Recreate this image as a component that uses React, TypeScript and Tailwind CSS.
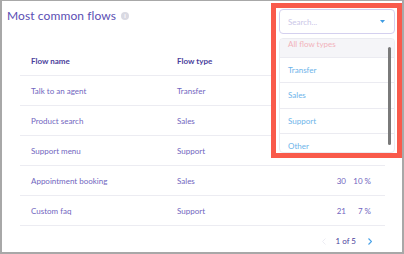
import React from 'react';

const rows = [
    { name: 'Talk to an agent', type: 'Transfer', count: 120, pct: '40 %' },
    { name: 'Product search', type: 'Sales', count: 60, pct: '20 %' },
    { name: 'Support menu', type: 'Support', count: 45, pct: '15 %' },
    { name: 'Appointment booking', type: 'Sales', count: 30, pct: '10 %' },
    { name: 'Custom faq', type: 'Support', count: 21, pct: '7 %' },
];

const options = ['Transfer', 'Sales', 'Support', 'Other'];

const App = () => {
    return (
        <div className="w-[404px] h-[254px] bg-white font-['Lato',sans-serif]">
            <div className="relative w-full h-full border-l-2 border-r-2 border-t border-b-2 border-[#a8a8a8] bg-white">
                <div className="flex items-center gap-[5px] pl-[5px] pt-[6px] h-[24px]">
                    <h2 className="text-[12px] text-[#5a4eb3] tracking-[0.1px]">Most common flows</h2>
                    <span className="w-[8px] h-[8px] rounded-full bg-[#d9d9e2] flex items-center justify-center text-[6px] text-white font-bold leading-none">i</span>
                </div>

                <div className="mt-[21px] ml-[18px] w-[365px]">
                    <div className="flex items-center h-[30px] border-b border-[#ececf2] text-[8px] font-bold text-[#4a3e9c]">
                        <div className="w-[157px] pl-[11px]">Flow name</div>
                        <div className="flex-1">Flow type</div>
                    </div>
                    {rows.map((r) => (
                        <div key={r.name} className="flex items-center h-[30px] border-b border-[#ececf2] text-[8px] text-[#7166c0]">
                            <div className="w-[157px] pl-[11px]">{r.name}</div>
                            <div className="flex-1">{r.type}</div>
                            <div className="w-[30px] text-right">{r.count}</div>
                            <div className="w-[25px] text-right">{r.pct}</div>
                            <div className="w-[14px]" />
                        </div>
                    ))}
                    <div className="flex items-center justify-end h-[30px] pr-[13px] text-[8px] text-[#4a3e9c]">
                        <svg width="4" height="7" viewBox="0 0 4 7" className="mr-[10px]"><path d="M3.5 0.5L0.5 3.5L3.5 6.5" fill="none" stroke="#ececf3" strokeWidth="1" /></svg>
                        <span>1 of 5</span>
                        <svg width="4" height="7" viewBox="0 0 4 7" className="ml-[12px]"><path d="M0.5 0.5L3.5 3.5L0.5 6.5" fill="none" stroke="#4aa3e8" strokeWidth="1.2" /></svg>
                    </div>
                </div>

                <div className="absolute left-[269px] top-[2px] w-[131px] h-[155px] border-[5px] border-[#f95a4b] bg-white">
                    <div className="ml-[3px] mr-[2px] mt-[1px] h-[25px] border border-[#d4d0ef] rounded-[4px] flex items-center justify-between pl-[8px] pr-[9px]">
                        <span className="text-[8px] text-[#cbc7e8]">Search...</span>
                        <svg width="5" height="3" viewBox="0 0 5 3"><path d="M0 0h5L2.5 3z" fill="#3f9ce2" /></svg>
                    </div>
                    <div className="relative ml-[3px] mr-[2px] mt-[4px] h-[115px] border border-[#ebebf1] rounded-[4px] overflow-hidden">
                        <div className="mt-[-7px]">
                            <div className="h-[25.5px] flex items-center pl-[8px] bg-[#f5f5f8] border-b border-[#ebebf1] text-[8px] text-[#f2b3bb]">All flow types</div>
                            {options.map((o) => (
                                <div key={o} className="h-[25.5px] flex items-center pl-[8px] border-b border-[#ebebf1] text-[8px] text-[#6db4ea]">{o}</div>
                            ))}
                        </div>
                        <div className="absolute right-[3px] top-[8px] w-[3px] h-[98px] rounded-full bg-[#7a7a7a]" />
                    </div>
                </div>
            </div>
        </div>
    );
};

export default App;
